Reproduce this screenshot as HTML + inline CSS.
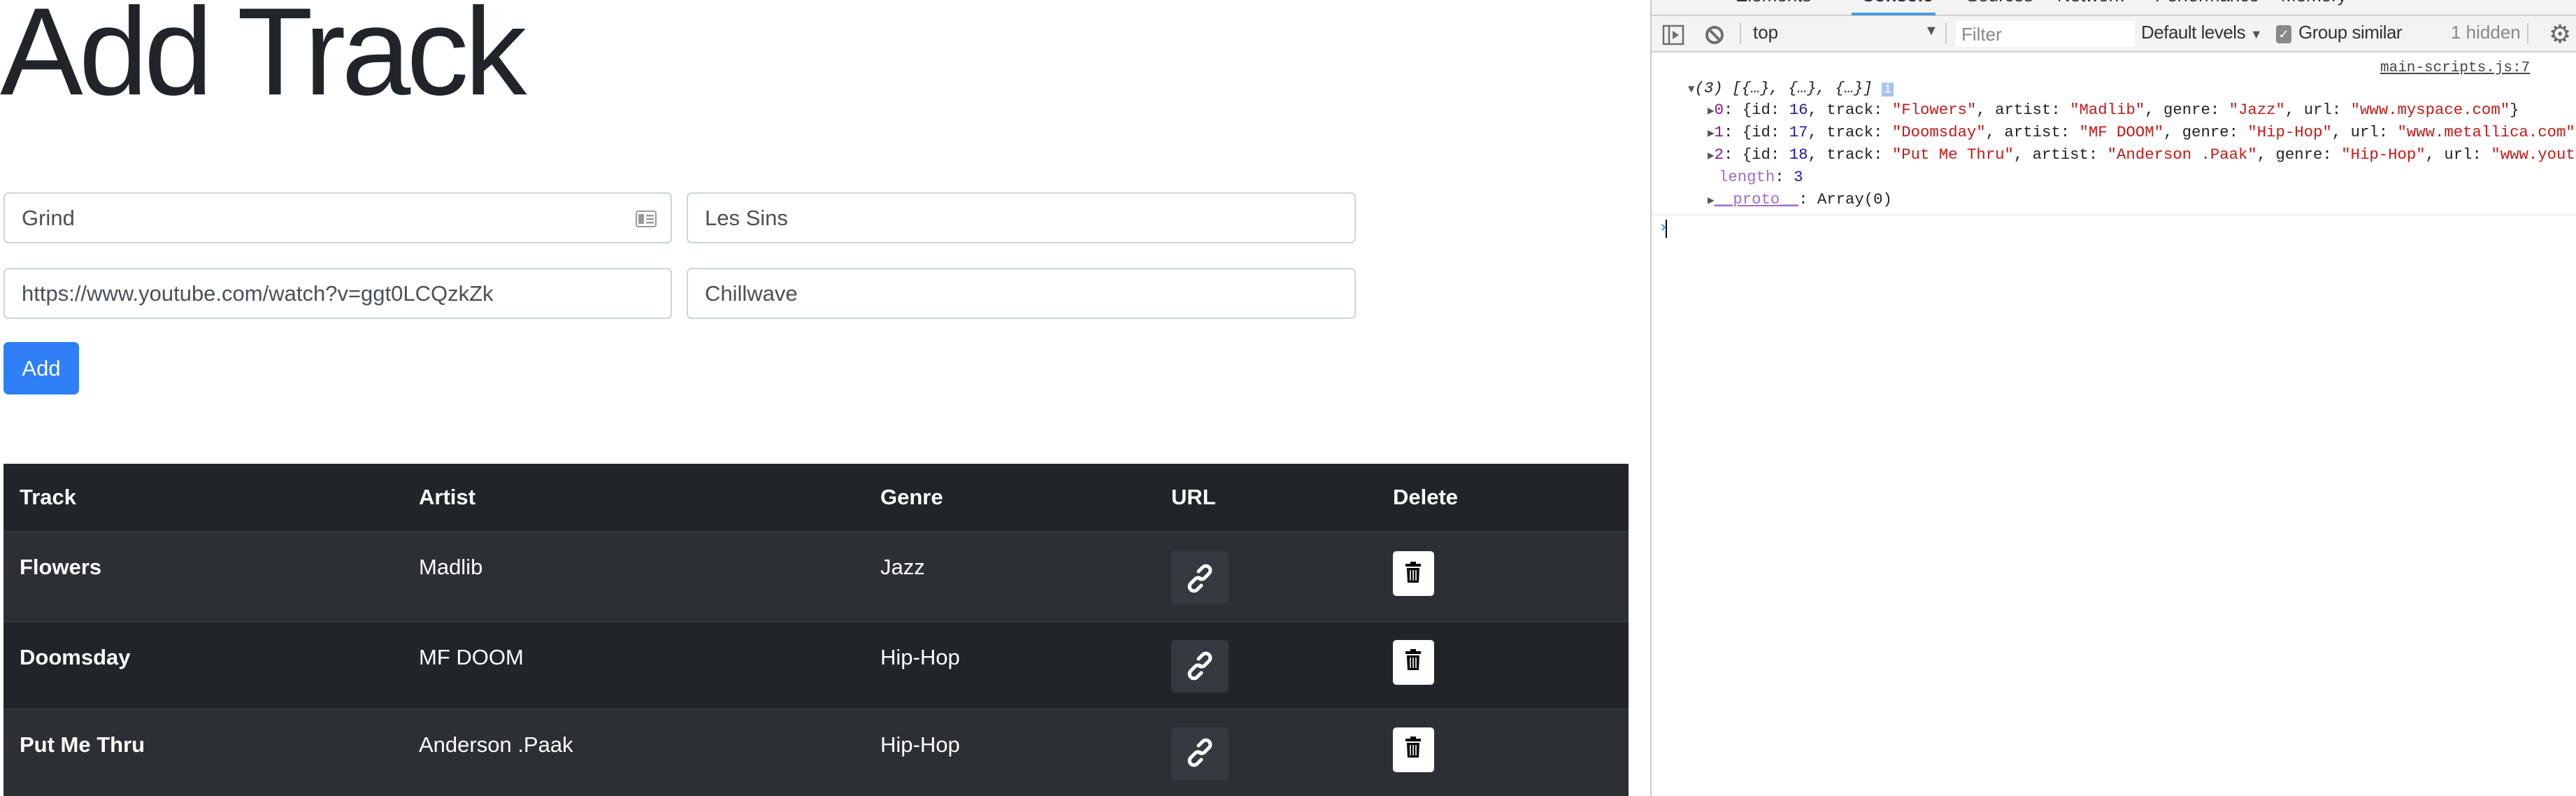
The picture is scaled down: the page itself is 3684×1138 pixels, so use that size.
<!DOCTYPE html>
<html><head><meta charset="utf-8"><style>
*{margin:0;padding:0;box-sizing:border-box}
body{width:3684px;height:1138px;overflow:hidden;background:#fff;position:relative;font-family:"Liberation Sans",sans-serif;color:#212529}
.a{position:absolute}
h1{position:absolute;left:0;top:-33px;font-size:178px;font-weight:300;letter-spacing:-6px;color:#212529;line-height:1.2}
.inp{position:absolute;border:2px solid #ced4da;border-radius:7px;background:#fff;font-size:31px;color:#495057;padding-left:24px;display:flex;align-items:center}
.btn{position:absolute;left:5px;top:489px;width:108px;height:75px;background:#2f7ff7;border-radius:7px;color:#fff;font-size:31px;display:flex;align-items:center;justify-content:center}
.tbl{position:absolute;left:5px;top:663px;width:2324px;height:475px;background:#212529;color:#fff;font-size:31px}
.row{position:absolute;left:0;width:100%;border-top:2px solid #32383e}
.c{position:absolute;top:0}
.lk{position:absolute;left:1670px;width:82px;height:75px;background:#343a40;border-radius:6px}
.dl{position:absolute;left:1987px;width:59px;height:64px;background:#fff;border-radius:5px}
.dt{position:absolute;left:2360px;top:0;width:1324px;height:1138px;overflow:hidden;border-left:2px solid #cbcbcb;background:#fff;font-family:"Liberation Sans",sans-serif}
.mono{font-family:"Liberation Mono",monospace;font-size:22.3px;position:absolute;white-space:pre;color:#222}
.r{color:#c41a16}.b{color:#1a1aa6}.p{color:#881391}.pl{color:#a36ac7}
.tab{position:absolute;top:-22px;font-size:26px;color:#333}
</style></head><body>
<h1>Add Track</h1>
<div class="inp" style="left:5px;top:275px;width:956px;height:73px">Grind
<svg class="a" style="right:20px;top:24px" width="30" height="24" viewBox="0 0 30 24"><rect x="1" y="1" width="28" height="22" rx="3" fill="none" stroke="#999" stroke-width="2"/><rect x="4" y="5" width="8" height="14" fill="#999"/><rect x="15" y="6" width="11" height="2.5" fill="#999"/><rect x="15" y="11" width="11" height="2.5" fill="#999"/><rect x="15" y="16" width="11" height="2.5" fill="#999"/></svg></div>
<div class="inp" style="left:982px;top:275px;width:957px;height:73px">Les Sins</div>
<div class="inp" style="left:5px;top:383px;width:956px;height:73px">https://www.youtube.com/watch?v=ggt0LCQzkZk</div>
<div class="inp" style="left:982px;top:383px;width:957px;height:73px">Chillwave</div>
<div class="btn">Add</div>

<div class="tbl">
 <div class="row" style="top:0;height:96px;border-top:none;font-weight:bold">
  <span class="c" style="left:23px;top:30px">Track</span><span class="c" style="left:594px;top:30px">Artist</span><span class="c" style="left:1254px;top:30px">Genre</span><span class="c" style="left:1670px;top:30px">URL</span><span class="c" style="left:1987px;top:30px">Delete</span>
 </div>
 <div class="row" style="top:96px;height:129px;background:#2c3034">
  <span class="c" style="left:23px;top:32px;font-weight:bold">Flowers</span><span class="c" style="left:594px;top:32px">Madlib</span><span class="c" style="left:1254px;top:32px">Jazz</span>
  <div class="lk" style="top:27px"></div><div class="dl" style="top:27px"></div>
 </div>
 <div class="row" style="top:225px;height:125px">
  <span class="c" style="left:23px;top:32px;font-weight:bold">Doomsday</span><span class="c" style="left:594px;top:32px">MF DOOM</span><span class="c" style="left:1254px;top:32px">Hip-Hop</span>
  <div class="lk" style="top:25px"></div><div class="dl" style="top:25px"></div>
 </div>
 <div class="row" style="top:350px;height:125px;background:#2c3034">
  <span class="c" style="left:23px;top:32px;font-weight:bold">Put Me Thru</span><span class="c" style="left:594px;top:32px">Anderson .Paak</span><span class="c" style="left:1254px;top:32px">Hip-Hop</span>
  <div class="lk" style="top:25px"></div><div class="dl" style="top:25px"></div>
 </div>
</div>
<svg class="a" style="left:0;top:0" width="2400" height="1138">
 <defs>
  <g id="lnk"><g fill="none" stroke="#fff" stroke-width="5" stroke-linecap="round"><path d="M-2 -10 L4 -16 a6 6 0 0 1 9 9 L7 -1 a6 6 0 0 1 -9 0"/><path d="M2 10 L-4 16 a6 6 0 0 1 -9 -9 L-7 1 a6 6 0 0 1 9 0"/></g></g>
  <g id="tr"><rect x="-11" y="-13" width="22" height="4" fill="#000"/><rect x="-4" y="-16" width="8" height="4" fill="#000"/><path d="M-9 -7 H9 L8 14 H-8 Z" fill="#000"/><g stroke="#fff" stroke-width="1.6"><path d="M-4 -4 V11 M0 -4 V11 M4 -4 V11"/></g></g>
 </defs>
 <use href="#lnk" x="1716" y="827"/><use href="#lnk" x="1716" y="952"/><use href="#lnk" x="1716" y="1076"/>
 <use href="#tr" x="2021" y="819"/><use href="#tr" x="2021" y="944"/><use href="#tr" x="2021" y="1069"/>
</svg>

<div class="dt">
 <div class="a" style="left:0;top:0;width:1324px;height:23px;background:#f3f3f3;border-bottom:2px solid #d0d0d0;overflow:hidden">
  <span class="tab" style="left:120px">Elements</span><span class="tab" style="left:300px;font-weight:bold">Console</span><span class="tab" style="left:450px">Sources</span><span class="tab" style="left:580px">Network</span><span class="tab" style="left:720px">Performance</span><span class="tab" style="left:900px">Memory</span>
 </div>
 <div class="a" style="left:286px;top:18px;width:120px;height:4px;background:#4a9be0"></div>
 <div class="a" style="left:0;top:23px;width:1324px;height:52px;background:#f3f3f3;border-bottom:2px solid #d0d0d0"></div>
 <svg class="a" style="left:15px;top:35px" width="32" height="30" viewBox="0 0 32 30"><rect x="2" y="2" width="28" height="26" fill="none" stroke="#6e6e6e" stroke-width="2.5"/><path d="M10 2V28" stroke="#6e6e6e" stroke-width="2.5"/><path d="M15 9L24 15L15 21Z" fill="#6e6e6e"/></svg>
 <svg class="a" style="left:76px;top:36px" width="28" height="28" viewBox="0 0 28 28"><circle cx="14" cy="14" r="11" fill="none" stroke="#6e6e6e" stroke-width="4"/><path d="M7 7L21 21" stroke="#6e6e6e" stroke-width="4"/></svg>
 <div class="a" style="left:126px;top:33px;width:2px;height:30px;background:#ccc"></div>
 <div class="a" style="left:145px;top:31px;font-size:26px;color:#333">top</div>
 <div class="a" style="left:390px;top:33px;font-size:20px;color:#555">▼</div>
 <div class="a" style="left:420px;top:33px;width:2px;height:30px;background:#ccc"></div>
 <div class="a" style="left:435px;top:30px;width:256px;height:37px;background:#fff;font-size:26px;color:#888;padding:4px 8px">Filter</div>
 <div class="a" style="left:700px;top:31px;font-size:26px;color:#333;letter-spacing:-0.5px">Default levels <span style="font-size:18px;color:#555">▼</span></div>
 <div class="a" style="left:893px;top:36px;width:22px;height:26px;background:#888;border-radius:4px;color:#fff;font-size:18px;text-align:center;line-height:26px">✓</div>
 <div class="a" style="left:925px;top:31px;font-size:26px;color:#333;letter-spacing:-0.5px">Group similar</div>
 <div class="a" style="left:1143px;top:31px;font-size:26px;color:#888">1 hidden</div>
 <div class="a" style="left:1252px;top:33px;width:2px;height:30px;background:#ccc"></div>
 <div class="a" style="left:1283px;top:28px;font-size:36px;color:#666">⚙</div>
 <div class="mono" style="left:1042px;top:86px;text-decoration:underline;color:#444;font-size:21px">main-scripts.js:7</div>
 <div class="mono" style="left:52px;top:113px"><span style="font-size:16px;color:#555">▼</span><i>(3) [{…}, {…}, {…}]</i> <span style="background:#a8c4ee;color:#fff;font-size:18px;padding:0 3px">i</span></div>
 <div class="mono" style="left:80px;top:144px"><span style="font-size:16px;color:#555">▶</span><span class="p">0</span>: {id: <span class="b">16</span>, track: <span class="r">"Flowers"</span>, artist: <span class="r">"Madlib"</span>, genre: <span class="r">"Jazz"</span>, url: <span class="r">"www.myspace.com"</span>}</div>
 <div class="mono" style="left:80px;top:176px"><span style="font-size:16px;color:#555">▶</span><span class="p">1</span>: {id: <span class="b">17</span>, track: <span class="r">"Doomsday"</span>, artist: <span class="r">"MF DOOM"</span>, genre: <span class="r">"Hip-Hop"</span>, url: <span class="r">"www.metallica.com"</span>}</div>
 <div class="mono" style="left:80px;top:208px"><span style="font-size:16px;color:#555">▶</span><span class="p">2</span>: {id: <span class="b">18</span>, track: <span class="r">"Put Me Thru"</span>, artist: <span class="r">"Anderson .Paak"</span>, genre: <span class="r">"Hip-Hop"</span>, url: <span class="r">"www.youtube.com"</span>}</div>
 <div class="mono" style="left:96px;top:240px"><span class="pl">length</span>: <span class="b">3</span></div>
 <div class="mono" style="left:80px;top:272px"><span style="font-size:16px;color:#555">▶</span><span class="pl" style="text-decoration:underline">__proto__</span>: Array(0)</div>
 <div class="a" style="left:0;top:306px;width:1324px;height:2px;background:#eee"></div>
 <div class="mono" style="left:10px;top:312px;color:#2b7de9">›</div>
 <div class="a" style="left:20px;top:314px;width:2px;height:26px;background:#000"></div>
</div>
</body></html>
